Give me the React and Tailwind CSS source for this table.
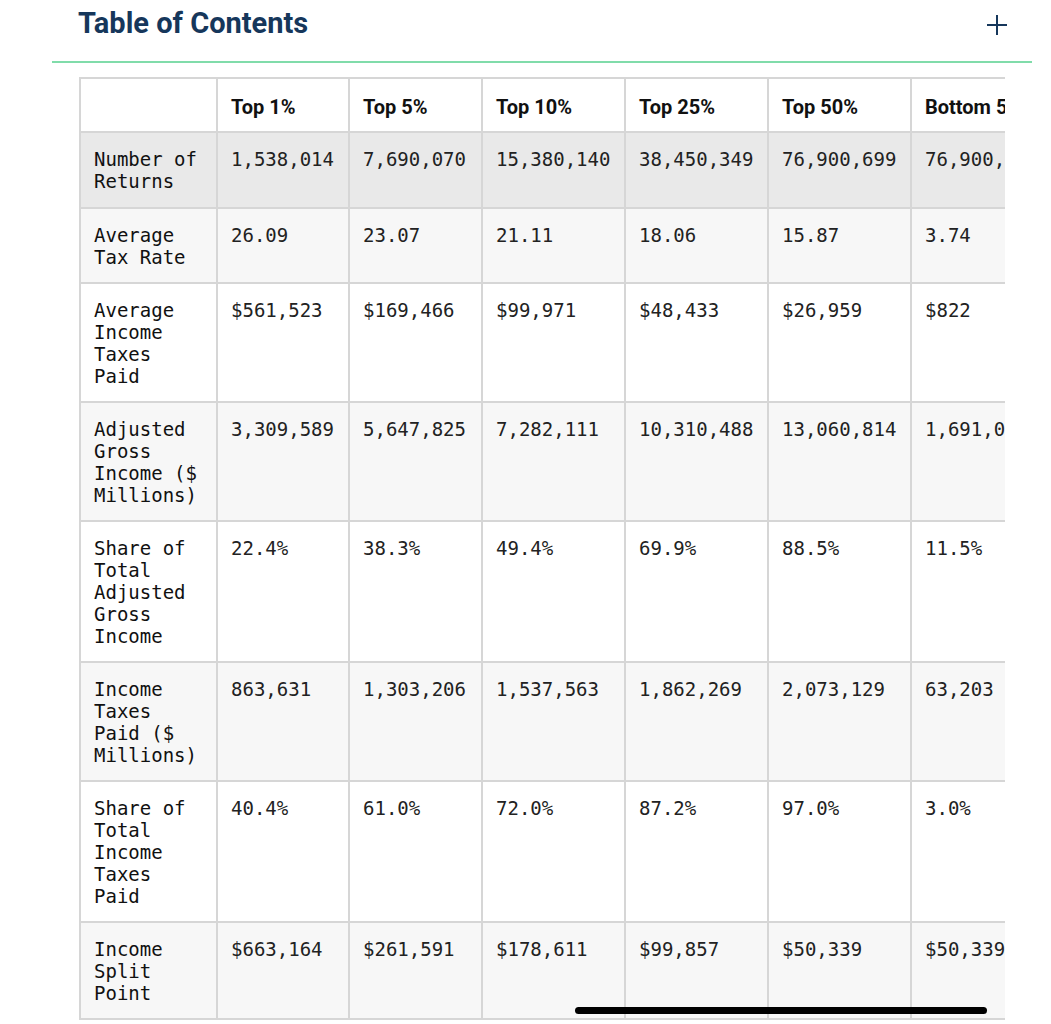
const columns = ["Top 1%", "Top 5%", "Top 10%", "Top 25%", "Top 50%", "Bottom 50%"];

const rows = [
  { label: "Number of Returns", values: ["1,538,014", "7,690,070", "15,380,140", "38,450,349", "76,900,699", "76,900,699"] },
  { label: "Average Tax Rate", values: ["26.09", "23.07", "21.11", "18.06", "15.87", "3.74"] },
  { label: "Average Income Taxes Paid", values: ["$561,523", "$169,466", "$99,971", "$48,433", "$26,959", "$822"] },
  { label: "Adjusted Gross Income ($ Millions)", values: ["3,309,589", "5,647,825", "7,282,111", "10,310,488", "13,060,814", "1,691,066"] },
  { label: "Share of Total Adjusted Gross Income", values: ["22.4%", "38.3%", "49.4%", "69.9%", "88.5%", "11.5%"] },
  { label: "Income Taxes Paid ($ Millions)", values: ["863,631", "1,303,206", "1,537,563", "1,862,269", "2,073,129", "63,203"] },
  { label: "Share of Total Income Taxes Paid", values: ["40.4%", "61.0%", "72.0%", "87.2%", "97.0%", "3.0%"] },
  { label: "Income Split Point", values: ["$663,164", "$261,591", "$178,611", "$99,857", "$50,339", "$50,339"] },
];

const rowBg = (i) => {
  if (i === 0) return "bg-[#e9e9e9]";
  return i % 2 === 1 ? "bg-[#f7f7f7]" : "bg-white";
};

const colWidths = ["w-[137px]", "w-[132px]", "w-[133px]", "w-[143px]", "w-[143px]", "w-[143px]", "w-[143px]"];

const App = () => {
  return (
    <div className="relative h-[1024px] w-[1051px] overflow-hidden bg-white">
      {/* toc header */}
      <div className="ml-[52px] mr-[19px] flex h-[63px] items-start justify-between border-b-2 border-[#80dcaa] pl-[26px] pr-[24px] pt-[3px]">
        <h2 className="text-[29px] font-bold leading-[40px] text-[#16375b]" style={{ fontFamily: "Roboto, 'Liberation Sans', sans-serif" }}>
          Table of Contents
        </h2>
        <svg width="22" height="22" viewBox="0 0 22 22" className="mt-[11px]" fill="none" stroke="#16375b" strokeWidth="2">
          <line x1="11" y1="1" x2="11" y2="21" />
          <line x1="1" y1="11" x2="21" y2="11" />
        </svg>
      </div>

      <div className="ml-[79px] mt-[14px] w-[926px] overflow-hidden">
        <table className="table-fixed border-collapse w-[974px]">
          <colgroup>
            {colWidths.map((w, i) => (
              <col key={i} className={w} />
            ))}
          </colgroup>
          <thead>
            <tr className="h-[54px] bg-white">
              <th className="border-2 border-[#d6d6d6]"></th>
              {columns.map((c) => (
                <th
                  key={c}
                  className="whitespace-nowrap border-2 border-[#d6d6d6] pl-[13px] pt-[3px] text-left align-middle text-[20px] font-bold text-[#111]"
                  style={{ fontFamily: "Roboto, 'Liberation Sans', sans-serif" }}
                >
                  {c}
                </th>
              ))}
            </tr>
          </thead>
          <tbody style={{ fontFamily: "'DejaVu Sans Mono', 'Liberation Mono', monospace" }}>
            {rows.map((r, i) => (
              <tr key={r.label} className={rowBg(i)}>
                <td className={`border-2 border-[#d6d6d6] pl-[13px] pr-[14px] pt-[15px] align-top text-[19px] leading-[22px] text-[#111] ${i === 0 ? "pb-[15px]" : "pb-[14px]"}`}>
                  {r.label}
                </td>
                {r.values.map((v, j) => (
                  <td
                    key={j}
                    className="whitespace-nowrap border-2 border-[#d6d6d6] pl-[13px] pt-[15px] align-top text-[19px] leading-[22px] text-[#222]"
                  >
                    {v}
                  </td>
                ))}
              </tr>
            ))}
          </tbody>
        </table>
      </div>

      {/* scroll indicator */}
      <div className="absolute left-[575px] top-[1007px] h-[7px] w-[412px] rounded-full bg-black"></div>
    </div>
  );
};

export default App;
